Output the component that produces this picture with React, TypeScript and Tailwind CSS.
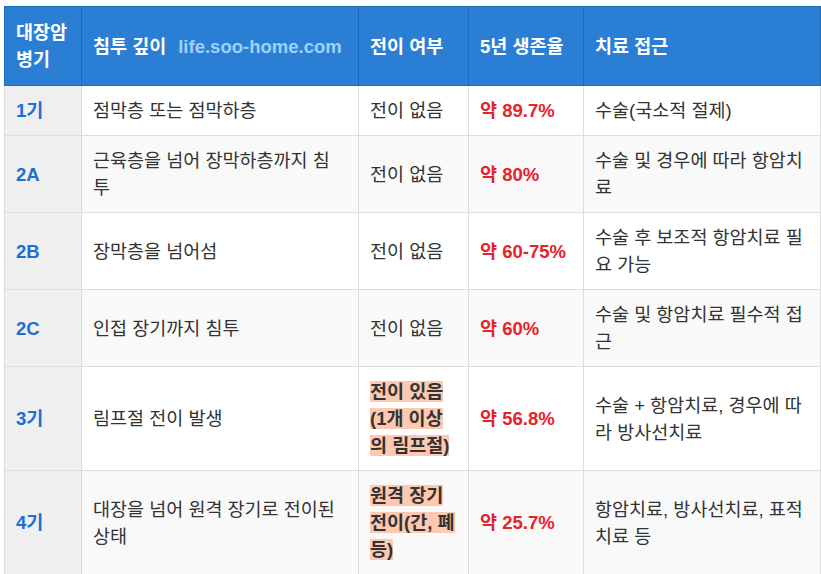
import React from "react";

type Row = {
  stage: string;
  depth: string;
  spread: string;
  spreadMark?: boolean;
  survival: string;
  treatment: string;
};

const rows: Row[] = [
  { stage: "1기", depth: "점막층 또는 점막하층", spread: "전이 없음", survival: "약 89.7%", treatment: "수술(국소적 절제)" },
  { stage: "2A", depth: "근육층을 넘어 장막하층까지 침투", spread: "전이 없음", survival: "약 80%", treatment: "수술 및 경우에 따라 항암치료" },
  { stage: "2B", depth: "장막층을 넘어섬", spread: "전이 없음", survival: "약 60-75%", treatment: "수술 후 보조적 항암치료 필요 가능" },
  { stage: "2C", depth: "인접 장기까지 침투", spread: "전이 없음", survival: "약 60%", treatment: "수술 및 항암치료 필수적 접근" },
  { stage: "3기", depth: "림프절 전이 발생", spread: "전이 있음 (1개 이상의 림프절)", spreadMark: true, survival: "약 56.8%", treatment: "수술 + 항암치료, 경우에 따라 방사선치료" },
  { stage: "4기", depth: "대장을 넘어 원격 장기로 전이된 상태", spread: "원격 장기 전이(간, 폐 등)", spreadMark: true, survival: "약 25.7%", treatment: "항암치료, 방사선치료, 표적치료 등" },
];

function Th({ children }: { children: React.ReactNode }) {
  return (
    <th className="border border-[#1d6bbd] px-[11px] py-[12px] text-left align-middle font-bold text-white">
      {children}
    </th>
  );
}

export default function App() {
  return (
    <div
      className="min-h-screen bg-white pl-[4px] pt-[6px] text-[18.5px] leading-[27px] text-[#333]"
      style={{ fontFamily: '"Liberation Sans", "Noto Sans CJK KR", sans-serif' }}
    >
      <table className="w-[816px] table-fixed border-collapse">
        <colgroup>
          <col className="w-[77px]" />
          <col className="w-[277px]" />
          <col className="w-[110px]" />
          <col className="w-[115px]" />
          <col className="w-[237px]" />
        </colgroup>
        <thead>
          <tr className="bg-[#2a7fd4]">
            <Th>대장암 병기</Th>
            <Th>
              침투 깊이
              <span className="ml-3 font-bold text-[#9fd1ff]">life.soo-home.com</span>
            </Th>
            <Th>전이 여부</Th>
            <Th>5년 생존율</Th>
            <Th>치료 접근</Th>
          </tr>
        </thead>
        <tbody>
          {rows.map((r, i) => (
            <tr key={r.stage} className={i % 2 === 1 ? "bg-[#f9f9f9]" : "bg-white"}>
              <td className="border border-[#dddddd] bg-[#efefef] px-[11px] py-[11px] align-middle font-bold text-[#1a6fd6]">
                {r.stage}
              </td>
              <td className="border border-[#dddddd] pl-[11px] pr-[16px] py-[11px] align-middle">{r.depth}</td>
              <td className="border border-[#dddddd] px-[11px] py-[11px] align-middle">
                {r.spreadMark ? (
                  <span className="bg-[#ffc8b0] font-bold text-[#333]">{r.spread}</span>
                ) : (
                  r.spread
                )}
              </td>
              <td className="border border-[#dddddd] px-[11px] py-[11px] align-middle font-bold text-[#e8212b]">
                {r.survival}
              </td>
              <td className="border border-[#dddddd] px-[11px] py-[11px] align-middle">{r.treatment}</td>
            </tr>
          ))}
        </tbody>
      </table>
    </div>
  );
}
